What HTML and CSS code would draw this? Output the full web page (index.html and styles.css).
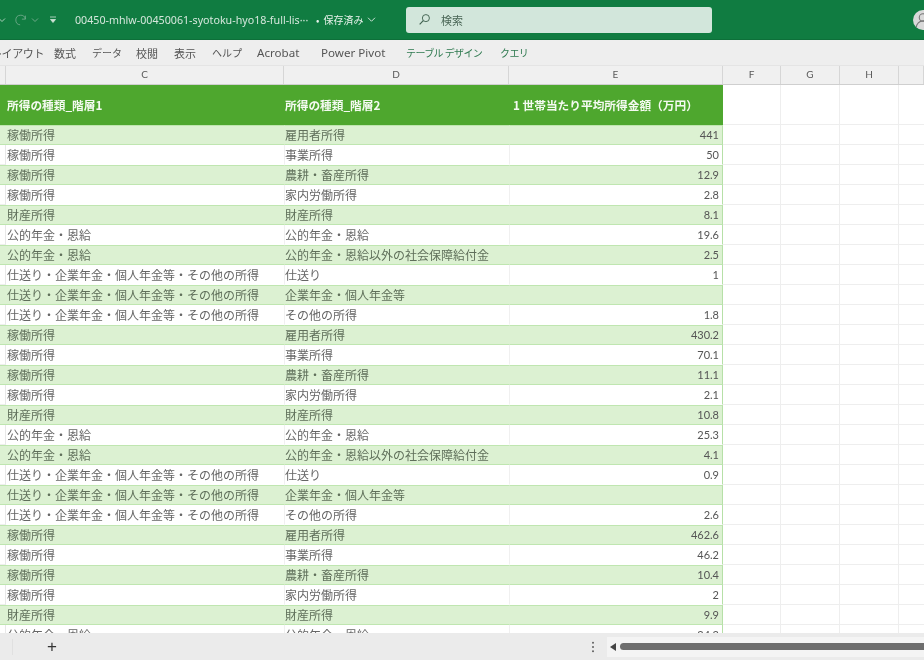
FILE: index.html
```html
<!DOCTYPE html>
<html lang="ja">
<head>
<meta charset="utf-8">
<title>Excel</title>
<link rel="stylesheet" href="styles.css">
</head>
<body>
<div class="app">
  <header class="titlebar">
    <div class="qat">
      <svg class="qi chev0" viewBox="0 0 8 8"><path d="M1 2.500l3 3 3-3" fill="none" stroke="#a9cdb9" stroke-width="1"/></svg>
      <svg class="redo" viewBox="0 0 16 16"><path d="M13 3v4H9M13 7A5.500 5.500 0 1 0 7 13.500" fill="none" stroke="#6fa98a" stroke-width="1"/></svg>
      <svg class="qi" viewBox="0 0 8 8"><path d="M1 2.500l3 3 3-3" fill="none" stroke="#6fa98a" stroke-width="1"/></svg>
      <svg class="qi cust" viewBox="0 0 8 8"><path d="M1 1h6M1.500 3.500h5L4 6.500z" fill="#cfe3d7" stroke="#cfe3d7" stroke-width=".8"/></svg>
    </div>
    <div class="docname">00450-mhlw-00450061-syotoku-hyo18-full-lis···</div>
    <div class="saved"><span>•</span><span>保存済み</span>
      <svg class="savedchev" viewBox="0 0 10 8"><path d="M1 2l4 4 4-4" fill="none" stroke="#e4f0e9" stroke-width="1"/></svg>
    </div>
    <div class="search">
      <svg class="lens" viewBox="0 0 14 14"><circle cx="8.500" cy="5.500" r="3.800" fill="none" stroke="#3d5f4d" stroke-width="1"/><path d="M5.700 8.300L1.800 12.200" stroke="#3d5f4d" stroke-width="1.200"/></svg>
      <span>検索</span>
    </div>
    <div class="avatar">
      <svg viewBox="0 0 24 24"><circle cx="12" cy="9" r="4.500" fill="none" stroke="#777" stroke-width="1.300"/><path d="M4 21a8 8 0 0 1 16 0" fill="none" stroke="#777" stroke-width="1.300"/></svg>
    </div>
  </header>

  <nav class="ribbon">
    <span class="tab clip"><span class="clipin">レイアウト</span></span>
    <span class="tab">数式</span>
    <span class="tab">データ</span>
    <span class="tab">校閲</span>
    <span class="tab">表示</span>
    <span class="tab">ヘルプ</span>
    <span class="tab">Acrobat</span>
    <span class="tab">Power Pivot</span>
    <span class="tab ctx">テーブル デザイン</span>
    <span class="tab ctx">クエリ</span>
  </nav>

  <div class="colhead">
    <div class="ch rh"></div>
    <div class="ch c">C</div>
    <div class="ch d">D</div>
    <div class="ch e">E</div>
    <div class="ch f">F</div>
    <div class="ch g">G</div>
    <div class="ch h">H</div>
    <div class="ch i"></div>
  </div>

  <main class="sheet">
    <div class="row head">
      <div class="cell rh"></div>
      <div class="cell c">所得の種類_階層1</div>
      <div class="cell d">所得の種類_階層2</div>
      <div class="cell e">1 世帯当たり平均所得金額（万円）</div>
      <div class="cell f"></div><div class="cell g"></div><div class="cell h"></div><div class="cell i"></div>
    </div>
    <div class="row band"><div class="cell rh"></div><div class="cell c">稼働所得</div><div class="cell d">雇用者所得</div><div class="cell e num">441</div><div class="cell f"></div><div class="cell g"></div><div class="cell h"></div><div class="cell i"></div></div>
    <div class="row"><div class="cell rh"></div><div class="cell c">稼働所得</div><div class="cell d">事業所得</div><div class="cell e num">50</div><div class="cell f"></div><div class="cell g"></div><div class="cell h"></div><div class="cell i"></div></div>
    <div class="row band"><div class="cell rh"></div><div class="cell c">稼働所得</div><div class="cell d">農耕・畜産所得</div><div class="cell e num">12.9</div><div class="cell f"></div><div class="cell g"></div><div class="cell h"></div><div class="cell i"></div></div>
    <div class="row"><div class="cell rh"></div><div class="cell c">稼働所得</div><div class="cell d">家内労働所得</div><div class="cell e num">2.8</div><div class="cell f"></div><div class="cell g"></div><div class="cell h"></div><div class="cell i"></div></div>
    <div class="row band"><div class="cell rh"></div><div class="cell c">財産所得</div><div class="cell d">財産所得</div><div class="cell e num">8.1</div><div class="cell f"></div><div class="cell g"></div><div class="cell h"></div><div class="cell i"></div></div>
    <div class="row"><div class="cell rh"></div><div class="cell c">公的年金・恩給</div><div class="cell d">公的年金・恩給</div><div class="cell e num">19.6</div><div class="cell f"></div><div class="cell g"></div><div class="cell h"></div><div class="cell i"></div></div>
    <div class="row band"><div class="cell rh"></div><div class="cell c">公的年金・恩給</div><div class="cell d">公的年金・恩給以外の社会保障給付金</div><div class="cell e num">2.5</div><div class="cell f"></div><div class="cell g"></div><div class="cell h"></div><div class="cell i"></div></div>
    <div class="row"><div class="cell rh"></div><div class="cell c">仕送り・企業年金・個人年金等・その他の所得</div><div class="cell d">仕送り</div><div class="cell e num">1</div><div class="cell f"></div><div class="cell g"></div><div class="cell h"></div><div class="cell i"></div></div>
    <div class="row band"><div class="cell rh"></div><div class="cell c">仕送り・企業年金・個人年金等・その他の所得</div><div class="cell d">企業年金・個人年金等</div><div class="cell e num"></div><div class="cell f"></div><div class="cell g"></div><div class="cell h"></div><div class="cell i"></div></div>
    <div class="row"><div class="cell rh"></div><div class="cell c">仕送り・企業年金・個人年金等・その他の所得</div><div class="cell d">その他の所得</div><div class="cell e num">1.8</div><div class="cell f"></div><div class="cell g"></div><div class="cell h"></div><div class="cell i"></div></div>
    <div class="row band"><div class="cell rh"></div><div class="cell c">稼働所得</div><div class="cell d">雇用者所得</div><div class="cell e num">430.2</div><div class="cell f"></div><div class="cell g"></div><div class="cell h"></div><div class="cell i"></div></div>
    <div class="row"><div class="cell rh"></div><div class="cell c">稼働所得</div><div class="cell d">事業所得</div><div class="cell e num">70.1</div><div class="cell f"></div><div class="cell g"></div><div class="cell h"></div><div class="cell i"></div></div>
    <div class="row band"><div class="cell rh"></div><div class="cell c">稼働所得</div><div class="cell d">農耕・畜産所得</div><div class="cell e num">11.1</div><div class="cell f"></div><div class="cell g"></div><div class="cell h"></div><div class="cell i"></div></div>
    <div class="row"><div class="cell rh"></div><div class="cell c">稼働所得</div><div class="cell d">家内労働所得</div><div class="cell e num">2.1</div><div class="cell f"></div><div class="cell g"></div><div class="cell h"></div><div class="cell i"></div></div>
    <div class="row band"><div class="cell rh"></div><div class="cell c">財産所得</div><div class="cell d">財産所得</div><div class="cell e num">10.8</div><div class="cell f"></div><div class="cell g"></div><div class="cell h"></div><div class="cell i"></div></div>
    <div class="row"><div class="cell rh"></div><div class="cell c">公的年金・恩給</div><div class="cell d">公的年金・恩給</div><div class="cell e num">25.3</div><div class="cell f"></div><div class="cell g"></div><div class="cell h"></div><div class="cell i"></div></div>
    <div class="row band"><div class="cell rh"></div><div class="cell c">公的年金・恩給</div><div class="cell d">公的年金・恩給以外の社会保障給付金</div><div class="cell e num">4.1</div><div class="cell f"></div><div class="cell g"></div><div class="cell h"></div><div class="cell i"></div></div>
    <div class="row"><div class="cell rh"></div><div class="cell c">仕送り・企業年金・個人年金等・その他の所得</div><div class="cell d">仕送り</div><div class="cell e num">0.9</div><div class="cell f"></div><div class="cell g"></div><div class="cell h"></div><div class="cell i"></div></div>
    <div class="row band"><div class="cell rh"></div><div class="cell c">仕送り・企業年金・個人年金等・その他の所得</div><div class="cell d">企業年金・個人年金等</div><div class="cell e num"></div><div class="cell f"></div><div class="cell g"></div><div class="cell h"></div><div class="cell i"></div></div>
    <div class="row"><div class="cell rh"></div><div class="cell c">仕送り・企業年金・個人年金等・その他の所得</div><div class="cell d">その他の所得</div><div class="cell e num">2.6</div><div class="cell f"></div><div class="cell g"></div><div class="cell h"></div><div class="cell i"></div></div>
    <div class="row band"><div class="cell rh"></div><div class="cell c">稼働所得</div><div class="cell d">雇用者所得</div><div class="cell e num">462.6</div><div class="cell f"></div><div class="cell g"></div><div class="cell h"></div><div class="cell i"></div></div>
    <div class="row"><div class="cell rh"></div><div class="cell c">稼働所得</div><div class="cell d">事業所得</div><div class="cell e num">46.2</div><div class="cell f"></div><div class="cell g"></div><div class="cell h"></div><div class="cell i"></div></div>
    <div class="row band"><div class="cell rh"></div><div class="cell c">稼働所得</div><div class="cell d">農耕・畜産所得</div><div class="cell e num">10.4</div><div class="cell f"></div><div class="cell g"></div><div class="cell h"></div><div class="cell i"></div></div>
    <div class="row"><div class="cell rh"></div><div class="cell c">稼働所得</div><div class="cell d">家内労働所得</div><div class="cell e num">2</div><div class="cell f"></div><div class="cell g"></div><div class="cell h"></div><div class="cell i"></div></div>
    <div class="row band"><div class="cell rh"></div><div class="cell c">財産所得</div><div class="cell d">財産所得</div><div class="cell e num">9.9</div><div class="cell f"></div><div class="cell g"></div><div class="cell h"></div><div class="cell i"></div></div>
    <div class="row"><div class="cell rh"></div><div class="cell c">公的年金・恩給</div><div class="cell d">公的年金・恩給</div><div class="cell e num">24.2</div><div class="cell f"></div><div class="cell g"></div><div class="cell h"></div><div class="cell i"></div></div>
  </main>

  <footer class="tabsbar">
    <div class="left">
      <span class="sep"></span>
      <span class="plus">+</span>
    </div>
    <div class="dots">
      <svg viewBox="0 0 4 14"><circle cx="2" cy="2" r="1.100"/><circle cx="2" cy="7" r="1.100"/><circle cx="2" cy="12" r="1.100"/></svg>
    </div>
    <div class="hscroll">
      <svg class="arrow" viewBox="0 0 6 8"><path d="M6 0v8L0 4z"/></svg>
      <div class="thumb"></div>
    </div>
  </footer>
</div>
</body>
</html>
```

FILE: styles.css
```css
* { box-sizing: border-box; }
html, body { margin: 0; padding: 0; background: #fff; }
body { width: 924px; height: 660px; overflow: hidden; font-family: "Noto Sans CJK JP", "Noto Sans", sans-serif; }
.app { width: 924px; height: 660px; display: flex; flex-direction: column; overflow: hidden; filter: blur(0.45px); }

.titlebar { height: 40px; flex: none; background: #107c41; border-bottom: 1px solid #0d6f39; display: flex; align-items: center; color: #e6f1ea; position: relative; }
.qat { width: 75px; flex: none; display: flex; align-items: center; }
.qi { width: 8px; height: 8px; display: block; flex: none; }
.chev0 { margin-left: -2px; }
.redo { width: 14px; height: 14px; margin-left: 8px; flex: none; }
.qat .qi:nth-child(3) { margin-left: 3px; }
.cust { margin-left: 10px; }
.docname { width: 241px; flex: none; font-family: "Noto Sans", sans-serif; font-size: 10.700px; white-space: nowrap; overflow: hidden; color: #d5e7dc; }
.saved { width: 90px; flex: none; font-size: 10px; display: flex; align-items: center; gap: 4px; }
.savedchev { width: 9px; height: 7px; }
.search { width: 306px; height: 26px; flex: none; background: #d2e6db; border-radius: 3px; display: flex; align-items: center; padding-left: 12px; gap: 10px; font-size: 11px; color: #4a6656; }
.lens { width: 13px; height: 13px; }
.avatar { position: absolute; left: 913px; top: 10px; width: 20px; height: 20px; border-radius: 50%; background: #d9d9d9; overflow: hidden; }
.avatar svg { width: 20px; height: 20px; display: block; }

.ribbon { height: 25px; flex: none; background: #eeeeee; display: flex; align-items: center; font-size: 11px; color: #555; white-space: nowrap; }
.tab { flex: none; }
.tab.clip { width: 54px; overflow: hidden; }
.clipin { display: block; margin-left: -9px; letter-spacing: -0.4px; }
.tab:nth-child(2) { width: 38px; }
.tab:nth-child(3) { width: 44px; font-size: 10px; }
.tab:nth-child(4) { width: 38px; }
.tab:nth-child(5) { width: 38px; }
.tab:nth-child(6) { width: 45px; font-size: 10px; }
.tab:nth-child(7) { width: 64px; font-family: "Noto Sans", sans-serif; font-size: 11.600px; }
.tab:nth-child(8) { width: 85px; font-family: "Noto Sans", sans-serif; font-size: 11.600px; }
.tab.ctx { color: #2f7a50; font-size: 10px; letter-spacing: -0.6px; }
.tab:nth-child(9) { width: 94px; }

.colhead { height: 20px; flex: none; display: flex; background: #f0f0f0; border-top: 1px solid #e4e4e4; border-bottom: 1px solid #cfcfcf; font-family: "Lato", sans-serif; font-size: 10px; color: #5a5a5a; }
.ch { display: flex; align-items: center; justify-content: center; border-right: 1px solid #d6d6d6; padding-bottom: 2px; }
.rh { width: 6px; flex: none; }
.c { width: 278px; flex: none; }
.d { width: 225px; flex: none; }
.e { width: 214px; flex: none; }
.f { width: 58px; flex: none; }
.g { width: 59px; flex: none; }
.h { width: 59px; flex: none; }
.i { flex: 1; }

.sheet { height: 548px; flex: none; overflow: hidden; background: #fff; }
.row { height: 20px; display: flex; font-size: 12px; color: #666; line-height: 19px; }
.cell { white-space: nowrap; overflow: visible; padding-left: 1px; border-bottom: 1px solid transparent; }
.cell.rh { padding: 0; background: #fff; border-right: 1px solid #e8e8e8; border-bottom: 1px solid #eeeeee; }
.cell.d { border-left: 1px solid #f0f0f0; padding-left: 0; }
.cell.e { border-left: 1px solid #f0f0f0; border-right: 1px solid #b6e0a7; }
.cell.num { text-align: right; padding-right: 3px; font-family: "Lato", sans-serif; font-size: 11px; color: #555; }
.cell.f, .cell.g, .cell.h, .cell.i { border-right: 1px solid #eeeeee; border-bottom: 1px solid #eeeeee; padding: 0; }
.cell.i { border-right: 0; }
.band .cell.rh, .band .cell.c, .band .cell.d, .band .cell.e { background: #dcf1d2; border-top: 1px solid #bfe6b0; border-bottom: 1px solid #bfe6b0; line-height: 17px; border-left-color: #dcf1d2; }
.band .cell.rh { border-right: 0; }
.band { color: #5f6f5a; }

.row.head { height: 40px; font-weight: 700; font-size: 11.700px; }
.head .cell.rh, .head .cell.c, .head .cell.d, .head .cell.e { background: #4ea72e; color: #f4faf1; line-height: 40px; border-left: 0; border-right: 0; border-bottom: 0; }
.head .cell.d { padding-left: 1px; }
.head .cell.e { padding-left: 4px; }

.tabsbar { flex: 1; background: #ebebeb; display: flex; align-items: center; color: #333; position: relative; }
.left { width: 589px; flex: none; display: flex; align-items: center; padding-left: 12px; }
.sep { width: 1px; height: 16px; background: #e0e0e0; }
.plus { margin-left: 34px; font-family: "Liberation Sans", sans-serif; font-size: 17px; line-height: 17px; color: #333; }
.dots { width: 18px; flex: none; display: flex; justify-content: flex-start; padding-left: 2px; }
.dots svg { width: 4px; height: 12px; fill: #555; }
.hscroll { flex: 1; height: 20px; background: #f4f4f4; display: flex; align-items: center; padding-left: 3px; gap: 4px; }
.arrow { width: 6px; height: 8px; fill: #444; flex: none; }
.thumb { flex: 1; height: 7px; background: #6e6e6e; border-radius: 3.500px 0 0 3.500px; }
```
